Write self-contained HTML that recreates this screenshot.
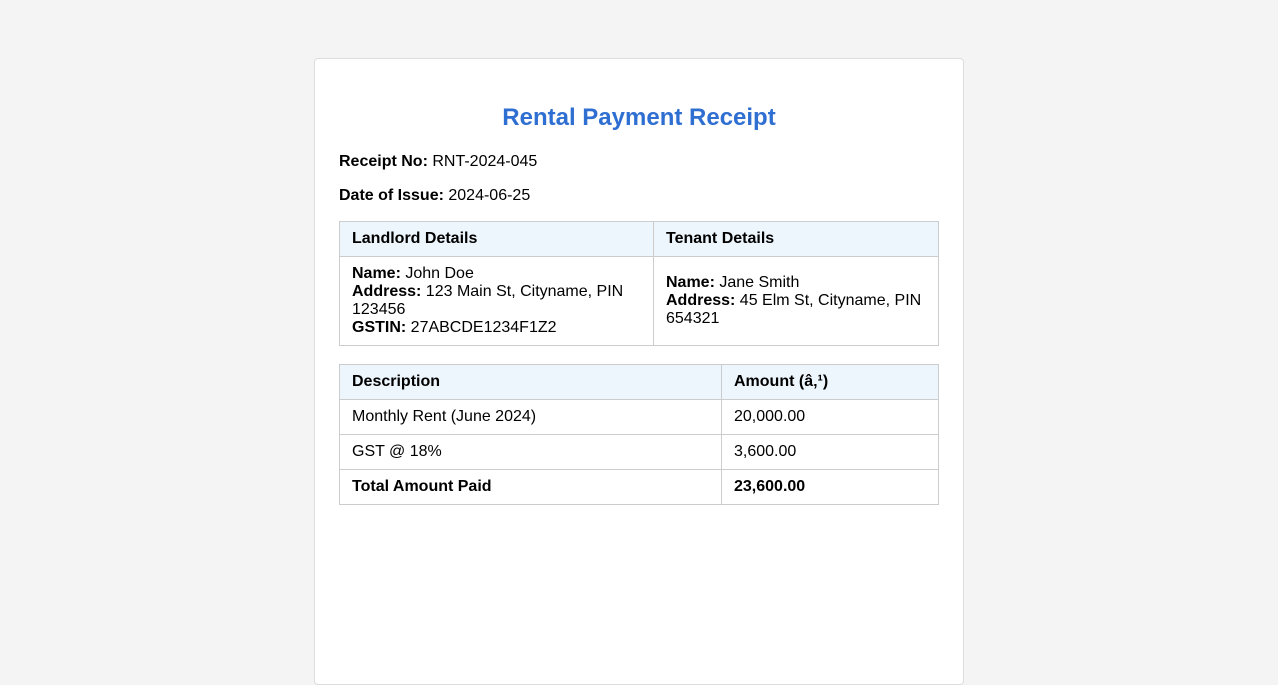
<!DOCTYPE html>
<html><head><meta charset="utf-8"><style>
body{margin:0;background:#f4f4f4;font-family:"Liberation Sans",Arial,sans-serif;font-size:16px;color:#000;}
.card{position:absolute;left:314px;top:58px;width:600px;padding:0 24px 25px;background:#fff;border:1px solid #ddd;border-radius:4px;height:600px;}
h2{color:#2f6fd2;text-align:center;font-size:24px;margin:45px 0 21px;line-height:28px;}
p{margin:0 0 16px;line-height:18px;}
table{width:600px;border-collapse:collapse;margin-bottom:18px;}
td,th{border:1px solid #ccc;padding:8px 12px;text-align:left;line-height:18px;vertical-align:middle;}
th{background:#eef6fd;font-weight:bold;}
</style></head><body>
<div class="card">
<h2>Rental Payment Receipt</h2>
<p><b>Receipt No:</b> RNT-2024-045</p>
<p><b>Date of Issue:</b> 2024-06-25</p>
<table>
<tr><th style="width:289px">Landlord Details</th><th>Tenant Details</th></tr>
<tr><td><b>Name:</b> John Doe<br><b>Address:</b> 123 Main St, Cityname, PIN 123456<br><b>GSTIN:</b> 27ABCDE1234F1Z2</td><td><b>Name:</b> Jane Smith<br><b>Address:</b> 45 Elm St, Cityname, PIN 654321</td></tr>
</table>
<table>
<tr><th style="width:357px">Description</th><th>Amount (â‚¹)</th></tr>
<tr><td>Monthly Rent (June 2024)</td><td>20,000.00</td></tr>
<tr><td>GST @ 18%</td><td>3,600.00</td></tr>
<tr><td><b>Total Amount Paid</b></td><td><b>23,600.00</b></td></tr>
</table>
</div>
</body></html>
